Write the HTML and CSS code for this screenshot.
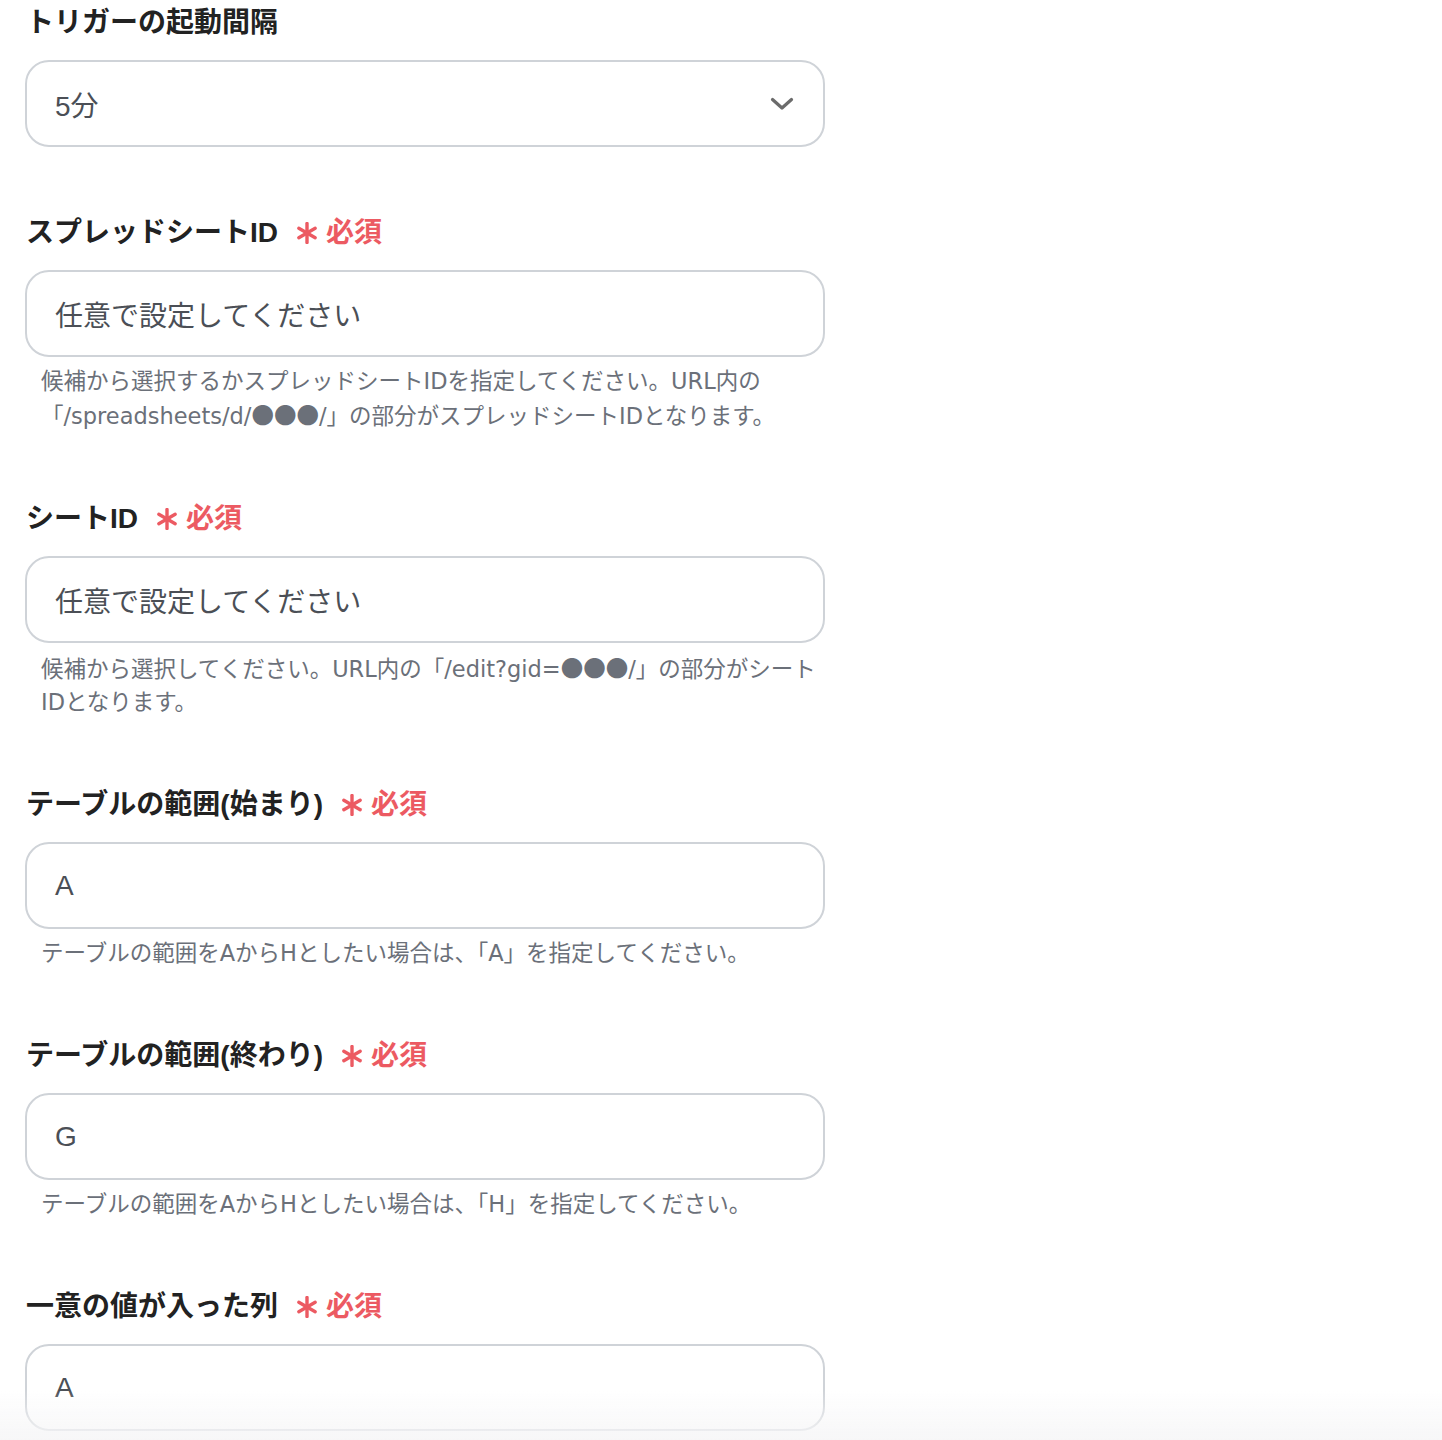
FILE: index.html
```html
<!DOCTYPE html>
<html lang="ja">
<head>
<meta charset="utf-8">
<title>トリガー設定</title>
<link rel="stylesheet" href="styles.css">
</head>
<body>
<main class="form">
  <section class="field">
    <div class="label">トリガーの起動間隔</div>
    <div class="input select">
      <span class="value">5分</span>
      <svg class="chevron" width="24" height="14" viewBox="0 0 24 14"><polyline points="2.5,2.5 12,11 21.5,2.5" fill="none" stroke="#6b6b6b" stroke-width="3.2" stroke-linecap="round" stroke-linejoin="round"/></svg>
    </div>
  </section>

  <section class="field">
    <div class="label">スプレッドシートID <span class="req"><svg class="ast" width="22" height="22" viewBox="0 0 22 22"><g stroke="#ec5a62" stroke-width="3.4" stroke-linecap="round"><line x1="11" y1="1.5" x2="11" y2="20.5"/><line x1="2.8" y1="6.25" x2="19.2" y2="15.75"/><line x1="2.8" y1="15.75" x2="19.2" y2="6.25"/></g></svg>必須</span></div>
    <div class="input"><span class="placeholder">任意で設定してください</span></div>
    <p class="help">候補から選択するかスプレッドシートIDを指定してください。URL内の「/spreadsheets/d/<span class="dots">●●●</span>/」の部分がスプレッドシートIDとなります。</p>
  </section>

  <section class="field">
    <div class="label">シートID <span class="req"><svg class="ast" width="22" height="22" viewBox="0 0 22 22"><g stroke="#ec5a62" stroke-width="3.4" stroke-linecap="round"><line x1="11" y1="1.5" x2="11" y2="20.5"/><line x1="2.8" y1="6.25" x2="19.2" y2="15.75"/><line x1="2.8" y1="15.75" x2="19.2" y2="6.25"/></g></svg>必須</span></div>
    <div class="input"><span class="placeholder">任意で設定してください</span></div>
    <p class="help">候補から選択してください。URL内の「/edit?gid=<span class="dots">●●●</span>/」の部分がシートIDとなります。</p>
  </section>

  <section class="field">
    <div class="label">テーブルの範囲(始まり) <span class="req"><svg class="ast" width="22" height="22" viewBox="0 0 22 22"><g stroke="#ec5a62" stroke-width="3.4" stroke-linecap="round"><line x1="11" y1="1.5" x2="11" y2="20.5"/><line x1="2.8" y1="6.25" x2="19.2" y2="15.75"/><line x1="2.8" y1="15.75" x2="19.2" y2="6.25"/></g></svg>必須</span></div>
    <div class="input"><span class="value">A</span></div>
    <p class="help">テーブルの範囲をAからHとしたい場合は、「A」を指定してください。</p>
  </section>

  <section class="field">
    <div class="label">テーブルの範囲(終わり) <span class="req"><svg class="ast" width="22" height="22" viewBox="0 0 22 22"><g stroke="#ec5a62" stroke-width="3.4" stroke-linecap="round"><line x1="11" y1="1.5" x2="11" y2="20.5"/><line x1="2.8" y1="6.25" x2="19.2" y2="15.75"/><line x1="2.8" y1="15.75" x2="19.2" y2="6.25"/></g></svg>必須</span></div>
    <div class="input"><span class="value">G</span></div>
    <p class="help">テーブルの範囲をAからHとしたい場合は、「H」を指定してください。</p>
  </section>

  <section class="field">
    <div class="label">一意の値が入った列 <span class="req"><svg class="ast" width="22" height="22" viewBox="0 0 22 22"><g stroke="#ec5a62" stroke-width="3.4" stroke-linecap="round"><line x1="11" y1="1.5" x2="11" y2="20.5"/><line x1="2.8" y1="6.25" x2="19.2" y2="15.75"/><line x1="2.8" y1="15.75" x2="19.2" y2="6.25"/></g></svg>必須</span></div>
    <div class="input"><span class="value">A</span></div>
  </section>
</main>
<div class="fade"></div>
</body>
</html>
```
FILE: styles.css
```css
html, body {
  margin: 0;
  padding: 0;
  background: #ffffff;
}
body {
  font-family: "Liberation Sans", "Noto Sans CJK JP", sans-serif;
  color: #222222;
}
.form {
  width: 800px;
  padding: 3px 0 0 25px;
}
.field {
  margin-bottom: 66px;
}
.label {
  font-size: 28px;
  font-weight: 700;
  line-height: 40px;
  height: 40px;
  color: #222222;
  padding-left: 1px;
  display: flex;
  align-items: center;
  white-space: nowrap;
}
.req {
  display: inline-flex;
  align-items: center;
  color: #ec5a62;
  margin-left: 18px;
  gap: 8px;
}
.ast {
  display: block;
}
.input {
  margin-top: 17px;
  box-sizing: border-box;
  height: 87px;
  border: 2px solid #cfd3d8;
  border-radius: 24px;
  padding: 0 28px;
  display: flex;
  align-items: center;
  justify-content: space-between;
  font-size: 28px;
  color: #4b4f56;
  background: #ffffff;
}
.placeholder {
  color: #4b4f56;
}
.chevron {
  display: block;
  margin-right: 1px;
}
.help {
  margin: 8px 0 1px;
  padding: 0 6px 0 16px;
  font-family: "DejaVu Sans", "Noto Sans CJK JP", sans-serif;
  font-size: 22.5px;
  line-height: 33px;
  color: #6b7079;
}
.dots {
  font-family: "Noto Sans CJK JP", sans-serif;
}
.fade {
  position: fixed;
  left: 0;
  right: 0;
  bottom: 0;
  height: 50px;
  background: linear-gradient(to bottom, rgba(246,246,247,0), rgba(246,246,247,0.9));
  pointer-events: none;
}
```
